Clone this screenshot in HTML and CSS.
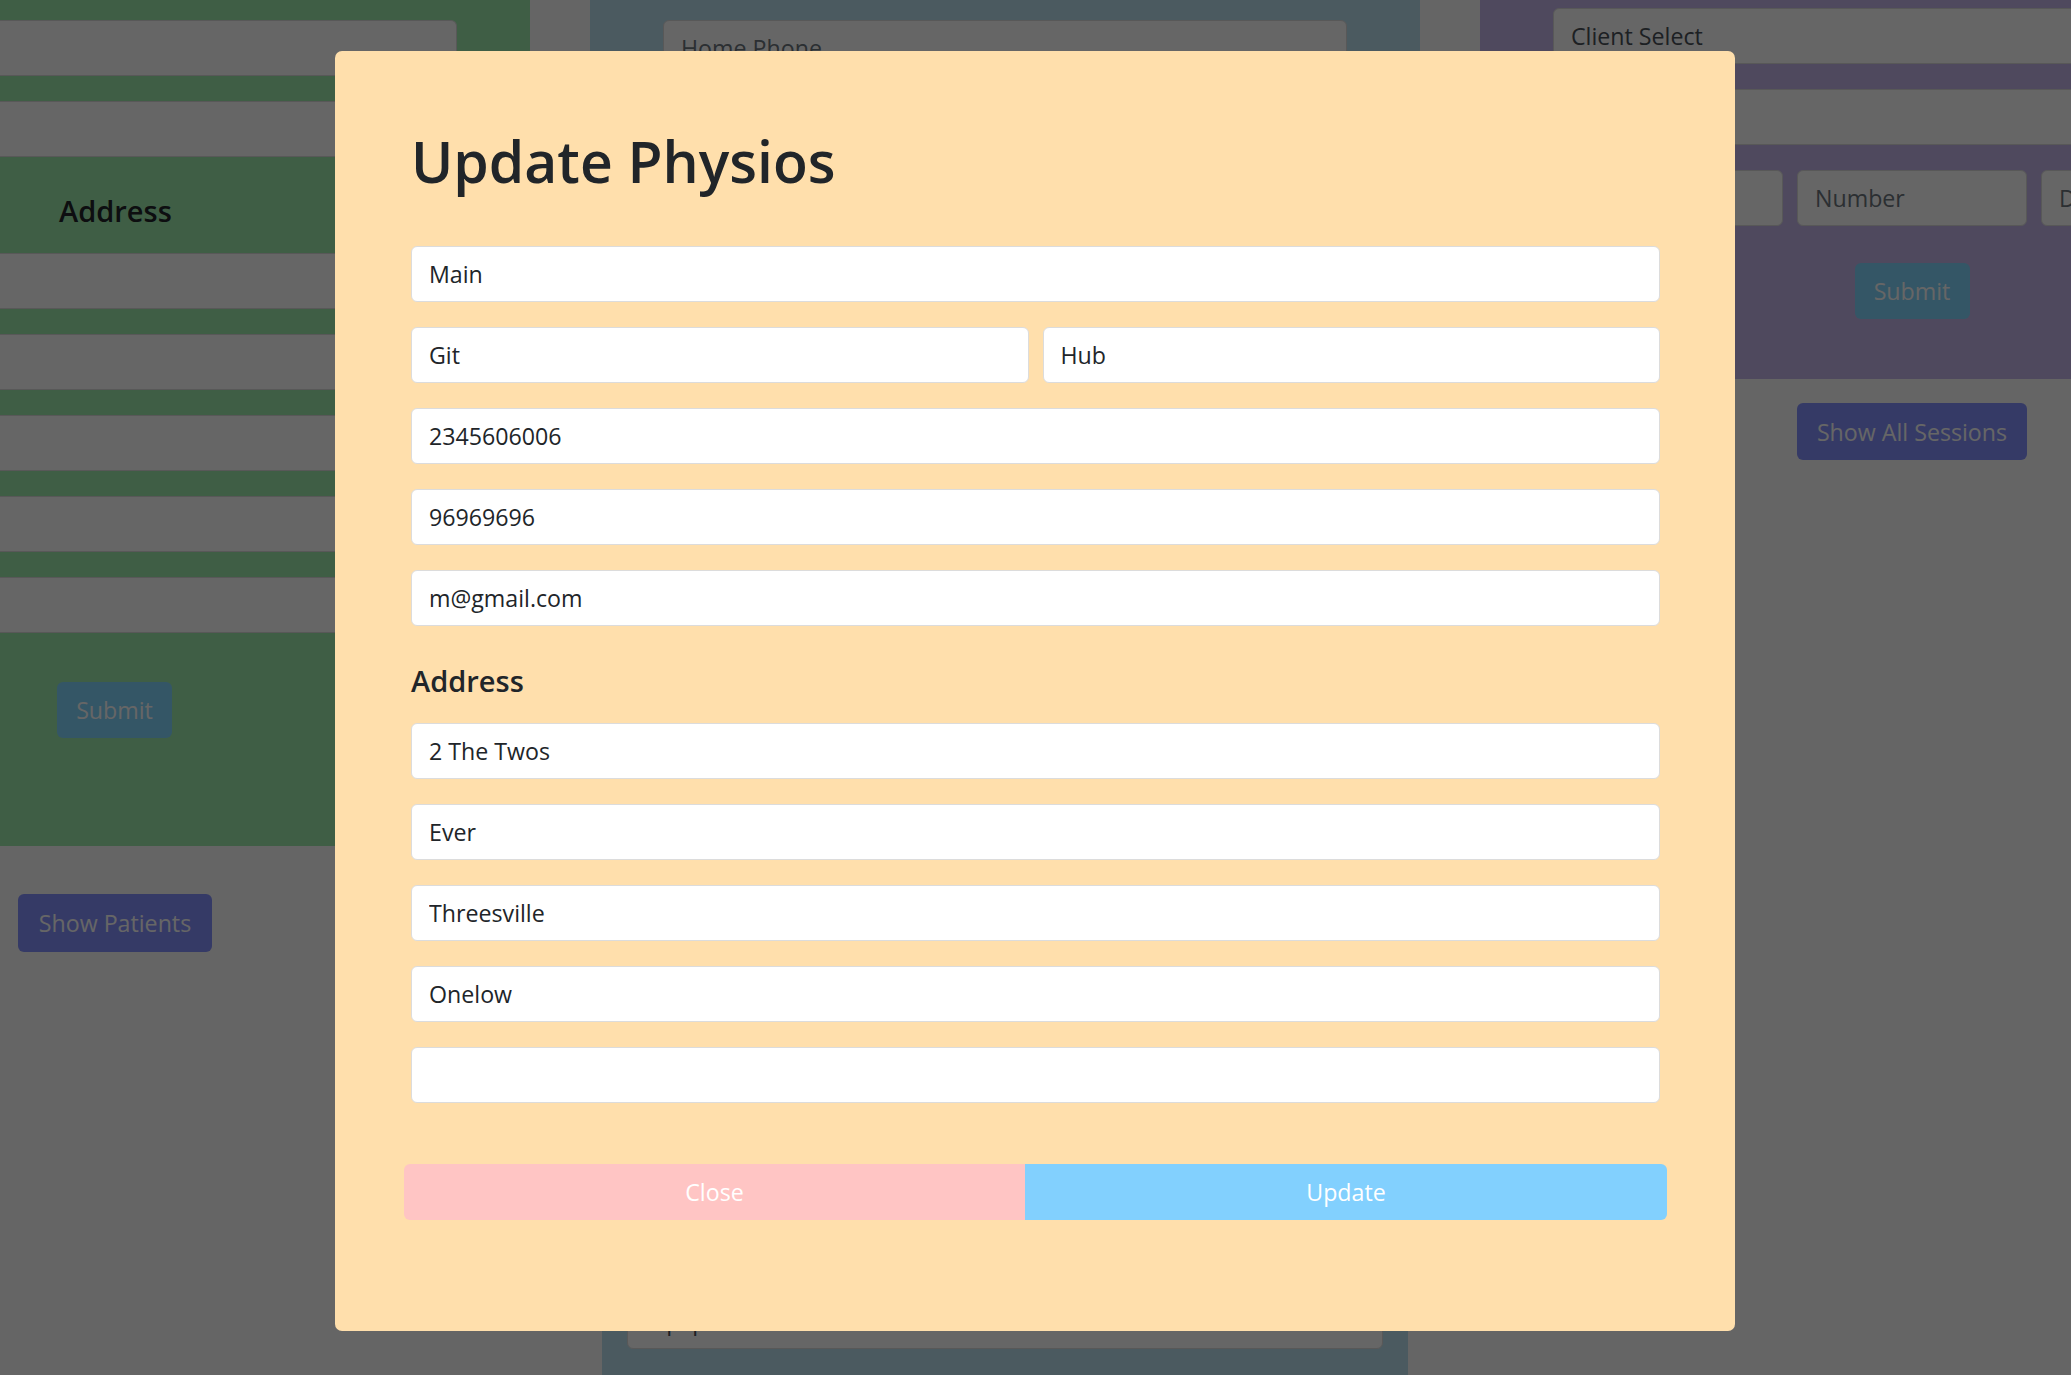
FILE: index.html
```html
<!DOCTYPE html>
<html lang="en">
<head>
<meta charset="utf-8">
<title>Update Physios</title>
<link rel="stylesheet" href="styles.css">
</head>
<body>
<div class="page">
  <section class="col col-left">
    <form class="panel panel-green">
      <input class="bar" type="text">
      <input class="bar" type="text">
      <h5 class="side-heading">Address</h5>
      <input class="bar" type="text">
      <input class="bar" type="text">
      <input class="bar" type="text">
      <input class="bar" type="text">
      <input class="bar" type="text">
      <button type="button" class="btn btn-submit btn-submit-left">Submit</button>
    </form>
    <button type="button" class="btn btn-show btn-show-left">Show Patients</button>
  </section>

  <section class="col col-mid">
    <form class="panel panel-blue">
      <input class="form-control" type="text" placeholder="Home Phone">
      <input class="form-control" type="text" placeholder="Mobile Phone">
      <input class="form-control" type="text" placeholder="Email">
      <input class="form-control" type="text" placeholder="Street">
      <input class="form-control" type="text" placeholder="Town">
      <input class="form-control" type="text" placeholder="City">
      <input class="form-control" type="text" placeholder="County">
      <input class="form-control" type="text" placeholder="Postcode">
    </form>
    <div class="panel panel-blue panel-blue-lower">
      <input class="form-control" type="text" value="Equipment">
    </div>
  </section>

  <section class="col col-right">
    <form class="panel panel-purple">
      <select class="form-control select"><option>Client Select</option></select>
      <input class="form-control" type="text">
      <div class="form-row">
        <input class="form-control" type="text" placeholder="Time">
        <input class="form-control" type="text" placeholder="Number">
        <input class="form-control" type="text" placeholder="Date">
      </div>
      <button type="button" class="btn btn-submit btn-center">Submit</button>
    </form>
    <button type="button" class="btn btn-show btn-show-right">Show All Sessions</button>
  </section>
</div>

<div class="backdrop"></div>

<div class="modal">
  <h1 class="modal-title">Update Physios</h1>
  <div class="form-group"><input class="form-control" type="text" value="Main"></div>
  <div class="form-group form-row">
    <input class="form-control" type="text" value="Git">
    <input class="form-control" type="text" value="Hub">
  </div>
  <div class="form-group"><input class="form-control" type="text" value="2345606006"></div>
  <div class="form-group"><input class="form-control" type="text" value="96969696"></div>
  <div class="form-group"><input class="form-control" type="text" value="m@gmail.com"></div>
  <h5 class="modal-subtitle">Address</h5>
  <div class="form-group"><input class="form-control" type="text" value="2 The Twos"></div>
  <div class="form-group"><input class="form-control" type="text" value="Ever"></div>
  <div class="form-group"><input class="form-control" type="text" value="Threesville"></div>
  <div class="form-group"><input class="form-control" type="text" value="Onelow"></div>
  <div class="form-group"><input class="form-control" type="text" value=""></div>
  <div class="modal-actions">
    <button type="button" class="action action-close">Close</button>
    <button type="button" class="action action-update">Update</button>
  </div>
</div>
</body>
</html>
```

FILE: styles.css
```css
* { box-sizing: border-box; }

html, body {
  margin: 0;
  padding: 0;
  width: 100%;
  height: 100%;
  overflow: hidden;
}

body {
  background: #fcfcfc;
  font-family: "Open Sans", "Noto Sans", sans-serif;
  font-size: 23.2px;
  color: #212529;
}

input, select, button {
  font: inherit;
}

.page {
  display: flex;
  align-items: flex-start;
  gap: 60px;
  width: max-content;
}

.col { flex-shrink: 0; display: flex; flex-direction: column; }
.col-left { width: 530px; }
.col-mid { width: 830px; }
.col-right { width: 864px; }

.panel { display: flex; flex-direction: column; }

/* left */
.panel-green {
  background: #9eebad;
  padding: 20px 73px 108px 0;
}
.bar {
  display: block;
  height: 56px;
  width: 100%;
  margin: 0 0 25px;
  border: 1px solid #dcdcdc;
  border-left: none;
  border-radius: 0 6px 6px 0;
  background: #fff;
}
.side-heading {
  margin: 11px 0 25px 59px;
  font-size: 29px;
  line-height: 35px;
  font-weight: 600;
  color: #212529;
}

.btn {
  border: none;
  color: #fff;
  border-radius: 6px;
  padding: 0;
  text-align: center;
}
.btn-submit {
  background: #82d7ff;
  width: 115px;
  height: 56px;
}
.btn-submit-left { margin: 24px 0 0 57px; }
.btn-show { background: #8491ff; }
.btn-show-left {
  width: 194px;
  height: 58px;
  margin: 48px 0 0 18px;
}

/* generic form control */
.form-control {
  display: block;
  width: 100%;
  height: 56px;
  padding: 0 17px;
  border: 1px solid #dcdcdc;
  border-radius: 6px;
  background: #fff;
  color: #212529;
  outline: none;
}
.form-control::placeholder { color: #6c757d; }

/* middle */
.panel-blue {
  background: #bce1f0;
  padding: 20px 73px 40px;
}
.panel-blue .form-control { margin-bottom: 25px; color: #495057; }
.panel-blue-lower {
  margin: 560px 12px 0;
  padding: 25px 25px 200px;
}

/* right */
.panel-purple {
  background: #c6b7eb;
  padding: 8px 73px 60px;
}
.panel-purple > .form-control { margin-bottom: 25px; color: #495057; }
.select { appearance: none; -webkit-appearance: none; }
.form-row {
  display: flex;
  gap: 14px;
}
.form-row .form-control { flex: 1 1 0; min-width: 0; }
.btn-center { margin: 37px auto 0; }
.btn-show-right {
  width: 230px;
  height: 57px;
  margin: 24px auto 0;
}

/* backdrop + modal */
.backdrop {
  position: fixed;
  inset: 0;
  background: rgba(0, 0, 0, 0.6);
}

.modal {
  position: fixed;
  left: 335px;
  top: 51px;
  width: 1400px;
  height: 1280px;
  padding: 75px 75px 0 76px;
  background: #ffdfac;
  border-radius: 7px;
  display: flex;
  flex-direction: column;
}
.modal-title {
  margin: 0 0 50px;
  font-size: 57px;
  line-height: 70px;
  font-weight: 600;
  color: #212529;
}
.form-group { margin-bottom: 25px; }
.modal-subtitle {
  margin: 12px 0 25px;
  font-size: 29px;
  line-height: 35px;
  font-weight: 600;
  color: #212529;
}
.modal-actions {
  display: flex;
  margin: 36px -7px 0 -7px;
  height: 56px;
  flex-shrink: 0;
}
.action {
  border: none;
  height: 56px;
  color: #fff;
  padding: 0;
}
.action-close {
  flex: 0 0 621px;
  background: #ffc5c4;
  border-radius: 6px 0 0 6px;
}
.action-update {
  flex: 1 1 auto;
  background: #82d0fe;
  border-radius: 0 6px 6px 0;
}
```
